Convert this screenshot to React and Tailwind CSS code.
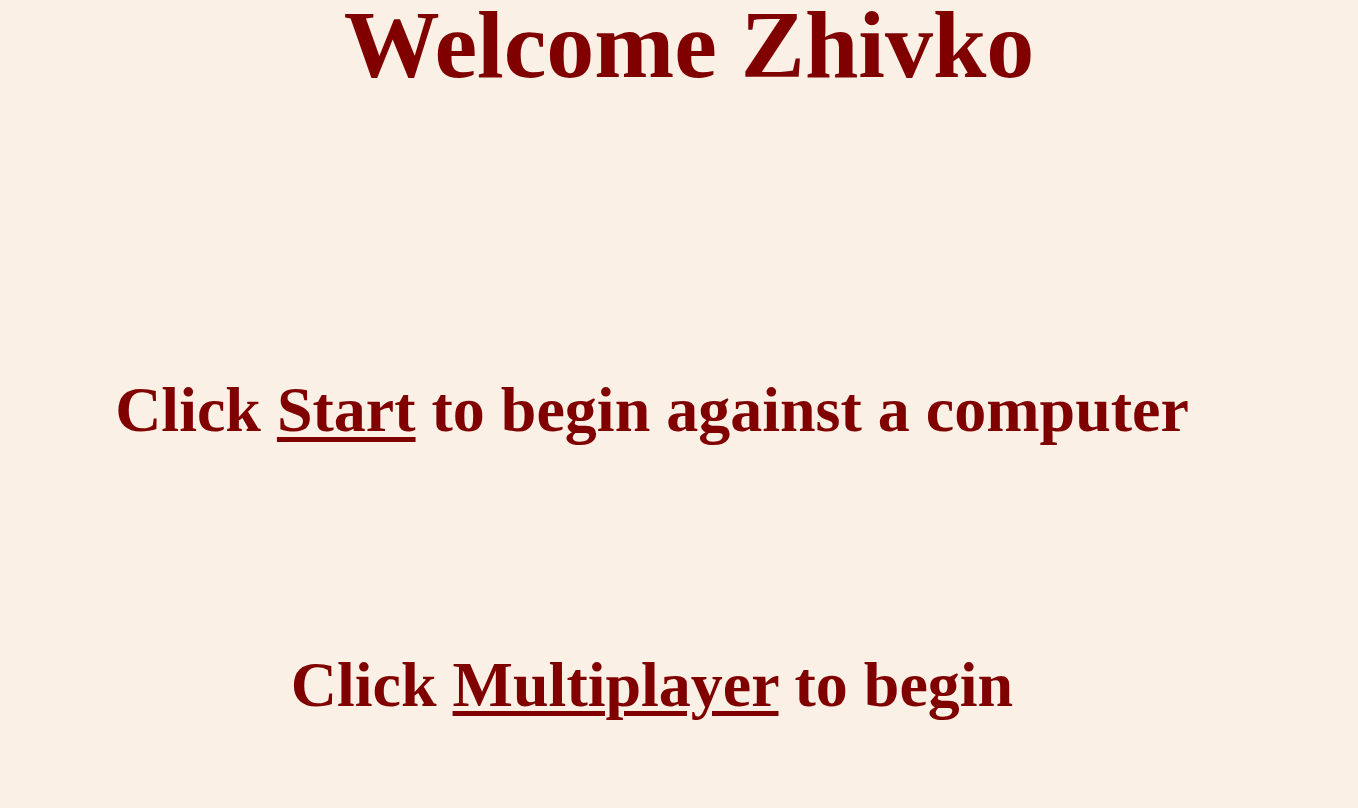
import React from 'react';

const App = () => {
    return (
        <div className="flex min-h-screen w-full flex-col bg-[#faf0e6] text-[#800000] font-bold font-['Liberation_Serif',_'Times_New_Roman',_serif] overflow-hidden">
            <h1 className="pl-[20px] text-center text-[96px] leading-[90px]">Welcome Zhivko</h1>

            <div className="mt-[288px] pr-[54px] text-center text-[64px] leading-[64px]">
                Click <a href="#" className="underline decoration-[5px] underline-offset-[6px]">Start</a> to begin against a computer
            </div>

            <div className="mt-[211px] pr-[54px] text-center text-[64px] leading-[64px]">
                Click <a href="#" className="underline decoration-[5px] underline-offset-[5px]">Multiplayer</a> to begin
            </div>
        </div>
    );
};

export default App;
